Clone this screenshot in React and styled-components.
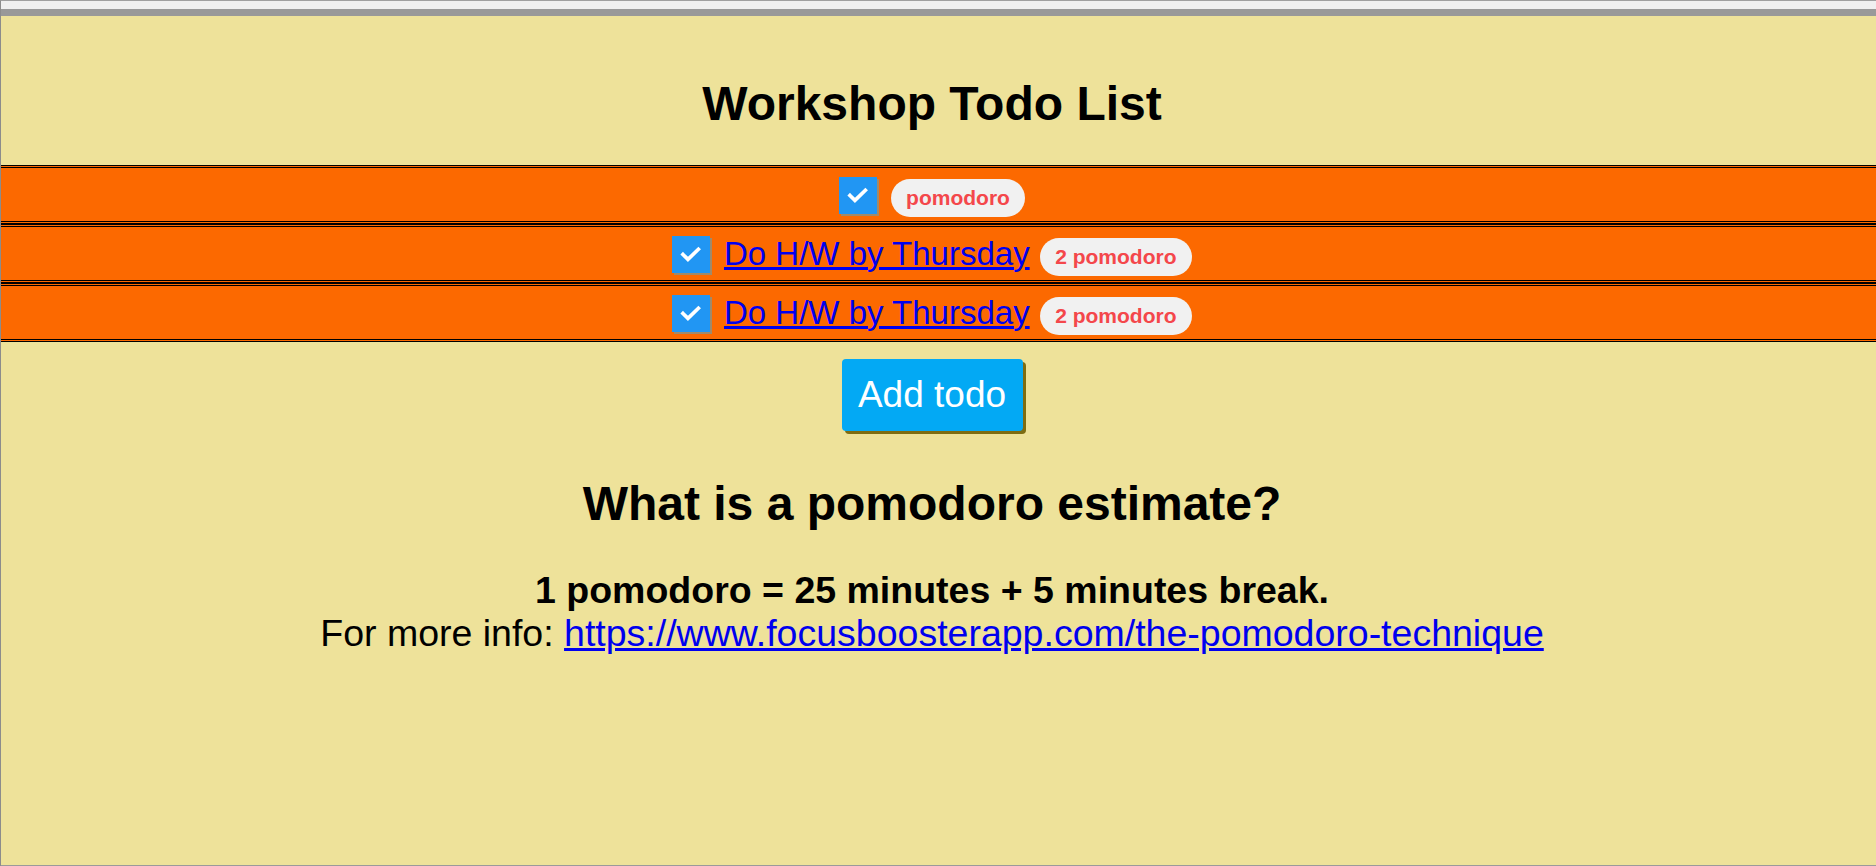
import React from 'react'
import styled, { createGlobalStyle } from 'styled-components'

const todos = [
  { title: '', estimate: 'pomodoro' },
  { title: 'Do H/W by Thursday', estimate: '2 pomodoro' },
  { title: 'Do H/W by Thursday', estimate: '2 pomodoro' },
]

const App = () => {
  return (
    <Frame>
      <GlobalStyle />
      <TopBar />
      <Page>
        <Content>
          <Title>Workshop Todo List</Title>

          <TodoList>
            {todos.map((todo, i) => (
              <TodoRow key={i}>
                <Checkbox>
                  <svg width="26" height="26" viewBox="0 0 24 24">
                    <path d="M4.6 12.4l4.6 4.6 9.6-9.4" fill="none" stroke="#fff" strokeWidth="3.4" strokeLinecap="square" />
                  </svg>
                </Checkbox>
                {todo.title && <TodoLink href="#">{todo.title}</TodoLink>}
                <Pill>{todo.estimate}</Pill>
              </TodoRow>
            ))}
          </TodoList>

          <AddButton>Add todo</AddButton>

          <Subtitle>What is a pomodoro estimate?</Subtitle>

          <Info>
            <strong>1 pomodoro = 25 minutes + 5 minutes break.</strong>
            <br />
            For more info: <a href="#">https://www.focusboosterapp.com/the-pomodoro-technique</a>
          </Info>
        </Content>
      </Page>
    </Frame>
  )
}

const GlobalStyle = createGlobalStyle`
  html, body {
    margin: 0;
    padding: 0;
  }
  body {
    font-family: "Liberation Sans", Arial, sans-serif;
  }
`

const Frame = styled.div`
  height: 100vh;
  display: flex;
  flex-direction: column;
  box-sizing: border-box;
  border-left: 1px solid #8c8c8c;
  border-top: 1px solid #a0a0a0;
`

const TopBar = styled.div`
  height: 8px;
  background: #f0f0f0;
  border-bottom: 7px solid #999999;
`

const Page = styled.div`
  flex: 1;
  background: #eee29a;
  border-bottom: 1px solid #9a9a9a;
`

const Content = styled.div`
  padding-right: 13px;
  text-align: center;
  color: #000;
`

const Title = styled.h1`
  margin: 0;
  padding-top: 60px;
  margin-bottom: 33px;
  font-size: 48px;
  line-height: 56px;
  font-weight: bold;
`

const TodoList = styled.div`
  display: flex;
  flex-direction: column;
  margin-right: -13px;
`

const TodoRow = styled.div`
  height: 53px;
  display: flex;
  align-items: center;
  justify-content: center;
  padding-right: 13px;
  background: #fc6900;
  border-top: 3px double #000;
  border-bottom: 3px double #000;
`

const Checkbox = styled.span`
  width: 38px;
  height: 37px;
  display: flex;
  align-items: center;
  justify-content: center;
  background: #2196f3;
  box-shadow: 2px 2px 0 #a08a6a;
  margin-right: 14px;
  margin-top: 1px;
`

const TodoLink = styled.a`
  font-size: 33px;
  color: #0000ee;
  text-decoration: underline;
  margin-right: 10px;
  line-height: 38px;
`

const Pill = styled.span`
  display: inline-block;
  background: #f1f1f1;
  color: #f4474b;
  font-weight: bold;
  font-size: 21px;
  line-height: 38px;
  height: 38px;
  padding: 0 15.5px;
  border-radius: 19px;
  margin-top: 7px;
`

const AddButton = styled.button`
  margin-top: 17px;
  width: 181px;
  height: 72px;
  border: none;
  border-radius: 4px;
  background: #03a9f4;
  color: #fff;
  font-family: "Liberation Sans", Arial, sans-serif;
  font-size: 37px;
  box-shadow: 3px 3px 0 #7e6d12;
  cursor: pointer;
`

const Subtitle = styled.h2`
  margin: 45px 0 0;
  font-size: 48px;
  line-height: 56px;
  font-weight: bold;
`

const Info = styled.div`
  margin-top: 37px;
  font-size: 37.5px;
  line-height: 43px;

  & a {
    color: #0000ee;
    text-decoration: underline;
  }
`

export default App
